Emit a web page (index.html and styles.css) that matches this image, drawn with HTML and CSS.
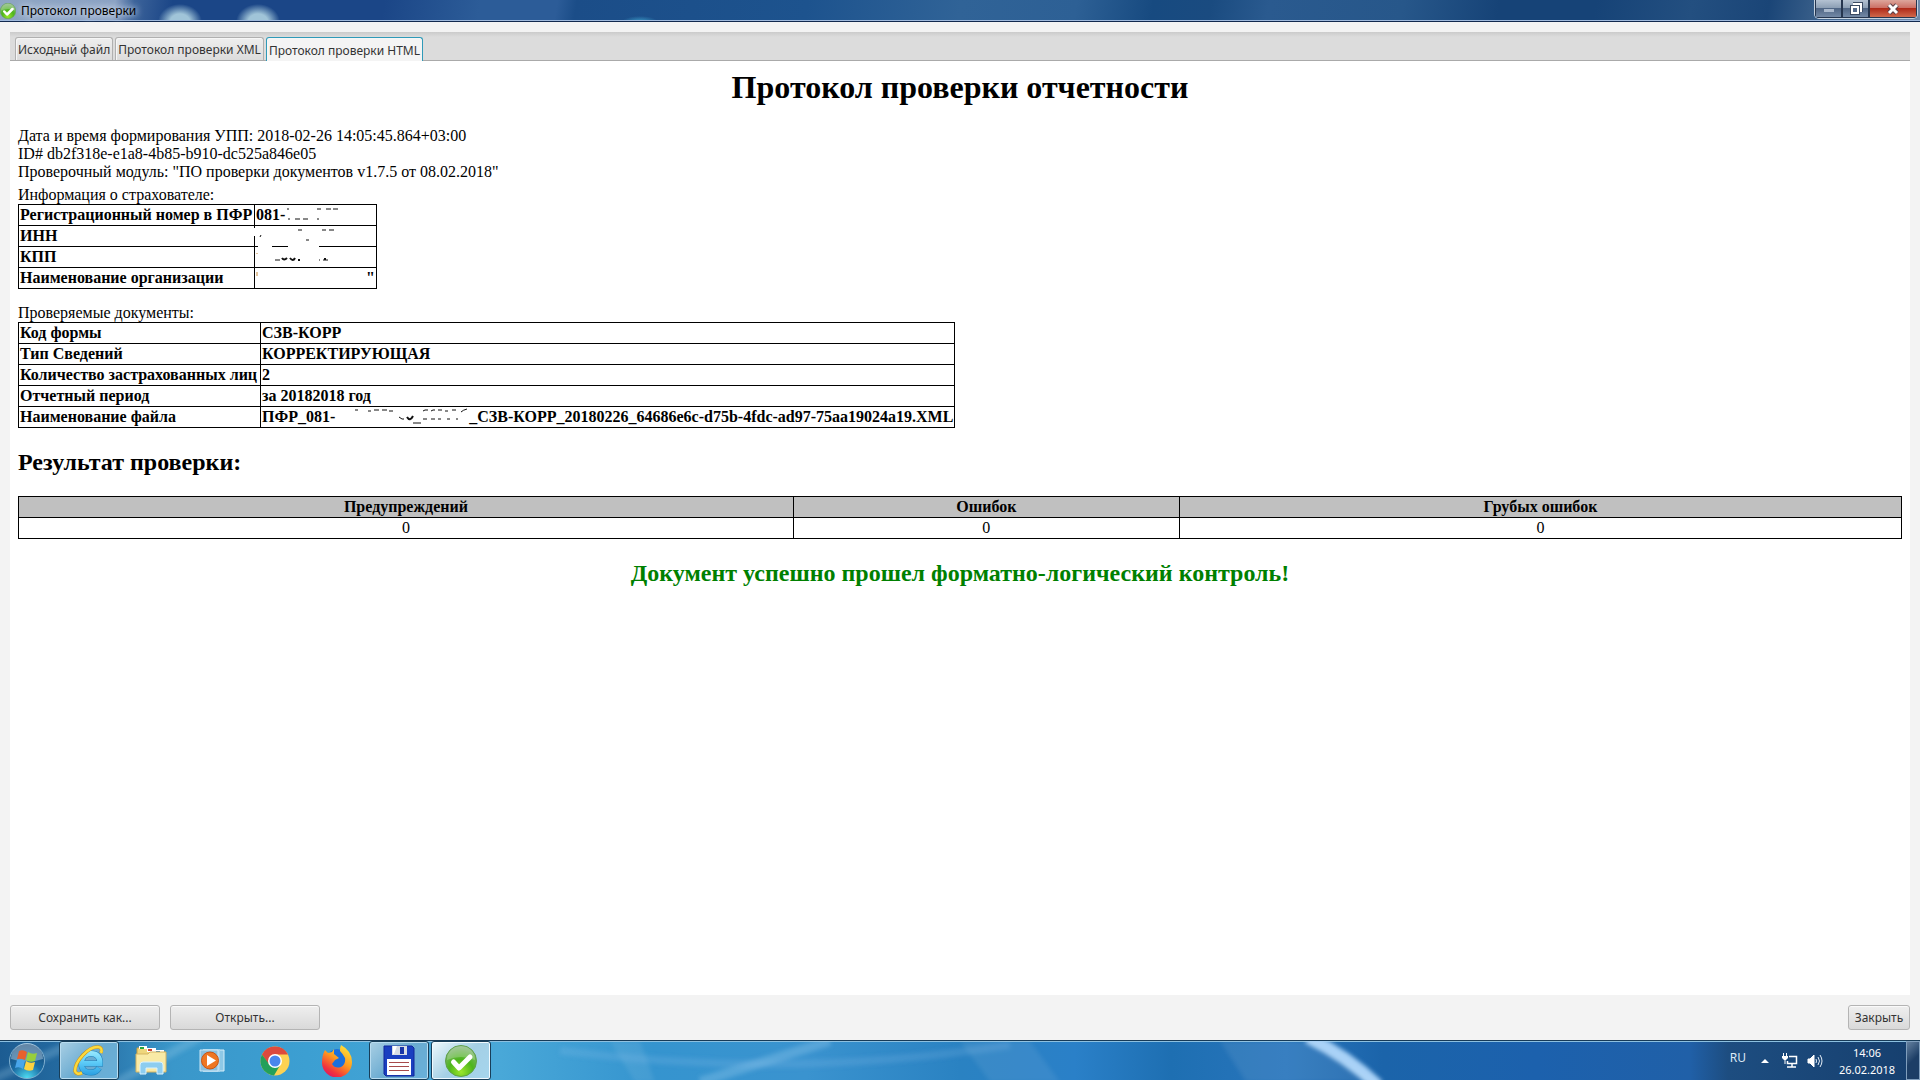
FILE: index.html
```html
<!DOCTYPE html>
<html lang="ru">
<head>
<meta charset="utf-8">
<title>Протокол проверки</title>
<link rel="stylesheet" href="styles.css">
</head>
<body>
<svg class="defs" width="0" height="0" aria-hidden="true">
  <defs>
    <radialGradient id="green" cx=".5" cy=".85" r=".8"><stop offset="0" stop-color="#9be62c"/><stop offset=".5" stop-color="#4db51c"/><stop offset="1" stop-color="#86b878"/></radialGradient>
    <symbol id="ok" viewBox="0 0 32 32"><circle cx="16" cy="16" r="15.500" fill="url(#green)" stroke="#5f9f4a"/><path d="M2 15a14 14 0 0 1 28 0q-14-6-28 0z" fill="#fff" opacity=".22"/><path d="M8.500 17l5.500 6 11-11" fill="none" stroke="#fff" stroke-width="5" stroke-linecap="round" stroke-linejoin="round"/></symbol>
  </defs>
</svg>
<header class="titlebar">
  <svg class="titlebar-icon" viewBox="0 0 32 32" aria-hidden="true"><use href="#ok"/></svg>
  <span class="titlebar-text">Протокол проверки</span>
  <div class="window-controls">
    <button class="wc" aria-label="Свернуть"><svg width="12" height="12"><rect x="1" y="6" width="10" height="3" fill="#a9b8cc"/></svg></button>
    <button class="wc" aria-label="Восстановить"><svg width="14" height="14"><path d="M4 2h8v8" fill="none" stroke="#3b4b63" stroke-width="4"/><path d="M4 2h8v8" fill="none" stroke="#fff" stroke-width="2"/><rect x="3" y="5" width="6" height="6" fill="#53698a" stroke="#3b4b63" stroke-width="4"/><rect x="3" y="5" width="6" height="6" fill="#53698a" stroke="#fff" stroke-width="2"/></svg></button>
    <button class="wc wc-close" aria-label="Закрыть окно"><svg width="14" height="12"><path d="M3 2l8 8M11 2l-8 8" stroke="#5a3f48" stroke-width="5"/><path d="M3 2l8 8M11 2l-8 8" stroke="#fff" stroke-width="3"/></svg></button>
  </div>
</header>
<main class="window">
  <div class="tabs" role="tablist">
    <button class="tab" role="tab">Исходный файл</button>
    <button class="tab" role="tab">Протокол проверки XML</button>
    <button class="tab tab-active" role="tab" aria-selected="true">Протокол проверки HTML</button>
  </div>
  <article class="report">
    <h1>Протокол проверки отчетности</h1>
    <p>Дата и время формирования УПП: 2018-02-26 14:05:45.864+03:00<br>ID# db2f318e-e1a8-4b85-b910-dc525a846e05<br>Проверочный модуль: "ПО проверки документов v1.7.5 от 08.02.2018"</p>
    <p class="caption-first">Информация о страхователе:</p>
    <div class="insurer">
      <table class="grid insurer-table">
        <tr><th>Регистрационный номер в ПФР</th><td>081-</td></tr>
        <tr><th>ИНН</th><td></td></tr>
        <tr><th>КПП</th><td></td></tr>
        <tr><th>Наименование организации</th><td class="quote">"</td></tr>
      </table>
      <svg class="erased" width="360" height="85" aria-hidden="true">
        <path d="M235 24h3v8h-3zM240 41h14v3h-14zM270 41h31v3h-31z" fill="#fff"/>
        <path d="M269 5h2M270 15h2M277 15h5M285 15h5M299 5h4M299 15h2M308 5h5M315 5h5M280 26h4M304 26h4M311 26h5M288 36h3M242 33l1-2M257 56h5M305 56h5M301 56h1" stroke="#111" fill="none"/>
        <path d="M264 54q2 3 5 0M272 54q3 4 5 0M280 56h2M307 54v2" stroke="#111" stroke-width="2" fill="none"/>
        <path d="M239 68v4M239 49v1" stroke="#c78b3c"/>
      </svg>
    </div>
    <p class="caption-docs">Проверяемые документы:</p>
    <table class="grid docs-table">
      <tr><th>Код формы</th><td>СЗВ-КОРР</td></tr>
      <tr><th>Тип Сведений</th><td>КОРРЕКТИРУЮЩАЯ</td></tr>
      <tr><th>Количество застрахованных лиц</th><td>2</td></tr>
      <tr><th>Отчетный период</th><td>за 20182018 год</td></tr>
      <tr><th>Наименование файла</th><td>ПФР_081-<svg class="erased-name" width="134" height="18" aria-hidden="true"><path d="M20 2h3M33 3h3M39 2h5M47 2h5M54 3h4M88 3l2-1h3M96 3l2-1h2M103 2h4M110 3h3M117 2h4M126 4q2-2 6-3M88 11h4M96 11h4M103 11h3M112 11h3M121 11h2M64 9l3 2h2M78 15h8" stroke="#111" fill="none"/><path d="M72 9q3 5 6-1" stroke="#111" stroke-width="2" fill="none"/></svg>_СЗВ-КОРР_20180226_64686e6c-d75b-4fdc-ad97-75aa19024a19.XML</td></tr>
    </table>
    <h2>Результат проверки:</h2>
    <table class="grid totals">
      <thead><tr><th class="c-warn">Предупреждений</th><th class="c-err">Ошибок</th><th>Грубых ошибок</th></tr></thead>
      <tbody><tr><td>0</td><td>0</td><td>0</td></tr></tbody>
    </table>
    <h2 class="success">Документ успешно прошел форматно-логический контроль!</h2>
  </article>
  <footer class="actions">
    <button class="btn btn-wide">Сохранить как...</button>
    <button class="btn btn-wide">Открыть...</button>
    <button class="btn btn-close">Закрыть</button>
  </footer>
</main>
<nav class="taskbar">
  <svg class="wallpaper" viewBox="0 0 1920 40" preserveAspectRatio="none" aria-hidden="true">
    <defs>
      <filter id="soft" x="-20%" y="-20%" width="140%" height="140%"><feGaussianBlur stdDeviation="2"/></filter>
    </defs>
    <g filter="url(#soft)" fill="none">
      <path d="M1308-4q40 20 70 50" stroke="#a9d2f7" stroke-width="13"/>
      <path d="M610 0h30l15 42h-20z" fill="#fff" opacity=".08"/>
      <path d="M830 0L700 42" stroke="#9fd0f2" stroke-width="10" opacity=".3"/>
      <path d="M560 10q230 30 450-6" stroke="#9fd0f2" stroke-width="8" opacity=".16"/>
      <path d="M960 0h70l30 42h-70z" fill="#fff" opacity=".07"/>
      <path d="M1220 0h90l66 42h-130z" fill="#fff" opacity=".08"/>
      <path d="M-10 40L70 4M110 46L200-4" stroke="#a4d5f0" stroke-width="9" opacity=".25"/>
    </g>
  </svg>
  <div class="apps">
    <button class="start" aria-label="Пуск">
      <svg width="38" height="38" viewBox="0 0 38 38">
        <defs><radialGradient id="orb" cx=".5" cy="1" r="1"><stop offset="0" stop-color="#4fe0f4"/><stop offset=".45" stop-color="#1b6da5"/><stop offset="1" stop-color="#16436f"/></radialGradient></defs>
        <circle cx="19" cy="19" r="17.500" fill="url(#orb)" stroke="#7fb0d0"/>
        <path d="M3 17a16 16 0 0 1 32 0q-16 5-32 0z" fill="#d8e9f5" opacity=".4"/>
        <path d="M11 9q4-2 8 1l-2 8q-4-2-8-1z" fill="#e8602c"/><path d="M20 10q4 3 9 1l-2 8q-5 2-9-1z" fill="#98cf3c"/>
        <path d="M9 18q4-2 8 1l-2 8q-4-3-8-1z" fill="#49a6ea"/><path d="M18 19q4 3 9 1l-2 8q-5 2-9-1z" fill="#fdd23f"/>
      </svg>
    </button>
    <button class="app app-open" aria-label="Internet Explorer">
      <svg width="34" height="34" viewBox="0 0 34 34"><defs><linearGradient id="ie" gradientUnits="userSpaceOnUse" x1="0" y1="5" x2="0" y2="31"><stop stop-color="#a5eeff"/><stop offset=".5" stop-color="#5fcdf8"/><stop offset="1" stop-color="#2b9fe2"/></linearGradient></defs><path d="M9 19.500H28Q28 9.500 19 9.500T9.500 19t9.500 9.500q5.500 0 8-4.500" fill="none" stroke="#1d7fb8" stroke-width="6"/><path d="M9 19.500H28Q28 9.500 19 9.500T9.500 19t9.500 9.500q5.500 0 8-4.500" fill="none" stroke="url(#ie)" stroke-width="5"/><path d="M29 9q2-5.500-3-6-7-.5-15 8T3 27q1 4 7 2" fill="none" stroke="#c9941a" stroke-width="3.500"/><path d="M29 9q2-5.500-3-6-7-.5-15 8T3 27q1 4 7 2" fill="none" stroke="#fcd93c" stroke-width="2.500"/></svg>
    </button>
    <button class="app" aria-label="Проводник">
      <svg width="34" height="32" viewBox="0 0 34 32"><path d="M3 3h10l2 3h15v20H3z" fill="#efd67c" stroke="#c59d3f"/><path d="M5 1h8v3H5z" fill="#fff"/><path d="M6 2h4v2H6z" fill="#25a63c"/><path d="M13 3h9v4h-9z" fill="#fff"/><path d="M14 4h4v2h-4z" fill="#cf4330"/><path d="M21 5h9v4h-9z" fill="#fff"/><path d="M22 6h4v2h-4z" fill="#3386cd"/><path d="M2 9h12l2-2h16v20H2z" fill="#f9eaa6" stroke="#d5b562"/><path d="M6 29V20q0-3 3-3h17q3 0 3 3v9h-6v-6H12v6z" fill="#8dcdf0" stroke="#d9f2ff"/></svg>
    </button>
    <button class="app" aria-label="Проигрыватель">
      <svg width="28" height="26" viewBox="0 0 28 26"><path d="M8 2h17v21H8z" fill="#8ec8e6" stroke="#d5eefa"/><path d="M4 1h17v23H4z" fill="#a4d3ec"/><path d="M1 2h18v21H1z" fill="#89c0df" stroke="#cbe7f6"/><circle cx="11" cy="12.500" r="8.500" fill="#ee7622" stroke="#c95513"/><path d="M8 7l9 5.500L8 18z" fill="#fff"/></svg>
    </button>
    <button class="app" aria-label="Google Chrome">
      <svg width="30" height="30" viewBox="0 0 30 30"><circle cx="15" cy="15" r="14.500" fill="#fcd253"/><path d="M2 8.500A14.500 14.500 0 0 1 28 8.500H15L8.500 18z" fill="#dc4a3d"/><path d="M2 8.500A14.500 14.500 0 0 0 14 29.500L20.500 18.500 9 18z" fill="#23a05a"/><circle cx="15" cy="15" r="7" fill="#fff"/><circle cx="15" cy="15" r="5.500" fill="#4a86ed"/></svg>
    </button>
    <button class="app" aria-label="Firefox">
      <svg width="32" height="32" viewBox="0 0 32 32"><defs><linearGradient id="fx" x1=".8" y1="0" x2=".2" y2="1"><stop stop-color="#ffe53b"/><stop offset=".45" stop-color="#ff9a1f"/><stop offset=".8" stop-color="#f1333d"/><stop offset="1" stop-color="#d7146b"/></linearGradient></defs><circle cx="16" cy="14" r="10" fill="#1c6fdc"/><path d="M4 5l3 3 4-1 2-3v5l5 4-4 2-3 4q3 5 9 3 5-3 4-9-2-4-5-7 0-4 1-6 11 6 11 17a15 15 0 0 1-30 1Q1 10 4 5z" fill="url(#fx)"/></svg>
    </button>
    <button class="app app-open" aria-label="Сохранение">
      <svg width="32" height="32" viewBox="0 0 32 32"><path d="M1 1h28l2 2v28H3l-2-2z" fill="#1a3fc0" stroke="#10279a"/><path d="M9 1h15v9H9z" fill="#d8dce4"/><path d="M10 1h4l-3 8h-1z" fill="#fff"/><path d="M17 2h4v7h-4z" fill="#1a36a8"/><path d="M4 14h24v16H4z" fill="#fff"/><path d="M6 17.500h20M6 21.500h20M6 25.500h20" stroke="#a74a4a"/></svg>
    </button>
    <button class="app app-current" aria-label="Протокол проверки">
      <svg width="32" height="32" viewBox="0 0 32 32"><use href="#ok"/></svg>
    </button>
  </div>
  <div class="tray">
    <span class="lang">RU</span>
    <svg width="8" height="6" aria-hidden="true"><path d="M0 5l4-4 4 4z" fill="#fff"/></svg>
    <svg class="net" width="16" height="16" aria-hidden="true"><path d="M7 3.500h7.500v7H5.500V8M10 11v3M5 14h9" fill="none" stroke="#fff" stroke-width="1.500"/><path d="M1.500 0v3M4.500 0v3M3 6v5" stroke="#fff"/><path d="M0 3h6v2L4 7H2L0 5z" fill="#fff"/></svg>
    <svg class="vol" width="16" height="14" aria-hidden="true"><path d="M1 5h2l4-4v12L3 9H1z" fill="#fff" stroke="#fff"/><path d="M9 5q1 2 0 4M11 3q3 4 0 8M13 1q4 6 0 12" fill="none" stroke="#e4edf6"/></svg>
    <time class="clock" datetime="2018-02-26T14:06">14:06<br>26.02.2018</time>
    <button class="show-desktop" aria-label="Показать рабочий стол"></button>
  </div>
</nav>
</body>
</html>
```
FILE: styles.css
```css
* { box-sizing: border-box; }
body {
  margin: 0;
  min-height: 100vh;
  display: flex;
  flex-direction: column;
  background: #f3f3f3;
  font: 12px/16px "Noto Sans", "Open Sans", sans-serif;
  color: #333;
}
button { font: inherit; color: inherit; padding: 0; margin: 0; }
svg { display: block; }
.defs { position: absolute; }

.titlebar {
  flex: none;
  height: 22px;
  display: flex;
  align-items: center;
  padding-right: 2px;
  border-bottom: 1px solid #12294f;
  box-shadow: inset 0 -1px #9fb9dc;
  background:
    radial-gradient(ellipse 22px 18px at 180px 22px, #a0c4d8 45%, transparent),
    radial-gradient(ellipse 22px 18px at 258px 22px, #a0c4d8 45%, transparent),
    radial-gradient(ellipse 18px 6px at 640px 22px, #3c9cc8, transparent),
    linear-gradient(100deg, #8ea5c3 0, #8ba2c4 6%, #3c639a 7%, #1b4687 9%, #1b4687 20%, #2c5c98 25%, #2c5c98 29%, #1b4d88 30%, #1d538e 42%, #306397 50%, #2d6095 56%, #174a80 60%, #1a4b80 63%, #2a5a8f 66%, #27578a 73%, #164377 78%, #164377 83%, #234f80 88%, #1a4577 92%, #56779b 97%, #6f8cac 100%);
}
.titlebar-icon { width: 16px; height: 16px; }
.titlebar-text {
  margin-left: 5px;
  color: #000;
  text-shadow: 0 0 6px #dce6f2, 0 0 8px #dce6f2;
}
.window-controls {
  margin-left: auto;
  align-self: flex-start;
  display: flex;
  height: 19px;
  border: 1px solid #c5d2e0;
  border-top: 0;
  border-radius: 0 0 5px 5px;
  overflow: hidden;
}
.wc {
  width: 27px;
  display: grid;
  place-items: center;
  border: 1px solid #26364f;
  border-top: 0;
  background: linear-gradient(#b4c2d2 0, #8d9fb5 45%, #506685 50%, #7389a6);
}
.wc-close { width: 48px; background: linear-gradient(#dda69c 0, #cc7166 45%, #b02b19 50%, #d0694c); }

.window {
  flex: 1;
  display: flex;
  flex-direction: column;
  padding: 10px;
}
.tabs {
  display: flex;
  gap: 2px;
  height: 29px;
  padding: 5px 5px 0;
  background: linear-gradient(#cbcbcb, #dcdcdc 5px);
  border-bottom: 1px solid #aaa;
}
.tab {
  padding: 2px 2px 0;
  border: 1px solid #b0b0b0;
  border-bottom: 0;
  border-radius: 3px 3px 0 0;
  background: linear-gradient(#eee, #dcdcdc);
  box-shadow: inset 1px 1px #f6f6f6;
}
.tab-active {
  margin-bottom: -1px;
  border: 1px solid #2f9ab8;
  border-bottom: 0;
  background: #f4f4f4;
}
.report {
  flex: 1;
  padding: 8px;
  background: #fff;
  color: #000;
  font: 16px/18px "Liberation Serif", "Times New Roman", serif;
}
.report p { margin: 0; }
.report h1 { margin: 0 0 21px; font-size: 32px; line-height: 37px; text-align: center; }
.report h2 { margin: 20px 0; font-size: 24px; line-height: 28px; }
.report .caption-first { margin-top: 5px; }
.report .caption-docs { margin-top: 15px; }
.report .success { text-align: center; color: #008000; }

.grid { border-collapse: collapse; }
.grid th, .grid td {
  height: 21px;
  padding: 1px;
  border: 1px solid #000;
  font-weight: bold;
  text-align: left;
  white-space: nowrap;
}
.insurer { position: relative; width: max-content; }
.insurer-table th { width: 236px; }
.insurer-table td { width: 122px; }
.docs-table th { width: 242px; }
.insurer-table .quote { text-align: right; }
.erased { position: absolute; left: 0; top: 0; }
.erased-name { display: inline-block; vertical-align: top; }
.totals { width: 100%; }
.totals th { background: #c0c0c0; text-align: center; }
.totals td { font-weight: normal; text-align: center; }
.c-warn { width: 41.15%; }
.c-err { width: 20.5%; }

.actions { display: flex; gap: 10px; padding-top: 10px; }
.btn {
  height: 25px;
  border: 1px solid #b4b4b4;
  border-radius: 3px;
  background: linear-gradient(#efefef, #d9d9d9);
  box-shadow: inset 0 1px #fafafa;
}
.btn-wide { width: 150px; }
.btn-close { width: 62px; margin-left: auto; }

.taskbar {
  position: relative;
  flex: none;
  height: 40px;
  display: flex;
  justify-content: space-between;
  border-top: 1px solid #173b58;
  box-shadow: inset 0 1px #8cc0e0;
  background: linear-gradient(90deg, #1c5c92 0, #2872a8 5%, #3a97ca 9%, #3c9fd2 16%, #49a8d8 26%, #3594cf 34%, #3a93cf 42%, #2a82c2 50%, #2a80c8 56%, #1e6fb2 61%, #2875bc 67%, #1b64aa 72%, #1c61ad 80%, #2060a8 88%, #1d4d80 90%, #163f6e 100%);
}
.wallpaper { position: absolute; inset: 0; width: 100%; height: 100%; }
.apps, .tray { position: relative; display: flex; }
.apps { gap: 2px; }
.start, .app {
  display: grid;
  place-items: center;
  border: 1px solid transparent;
  background: none;
}
.start { width: 54px; margin-right: 3px; }
.app { width: 60px; }
.app-open, .app-current {
  border-color: #183e59;
  border-radius: 3px;
  box-shadow: inset 0 0 0 1px #b8dcf0;
  background: linear-gradient(135deg, #a9cfe4 0, #6aabd1 50%, #68b0da);
}
.app-current { background: linear-gradient(135deg, #eef8fc, #a4cfe5 50%, #a5d6ee); box-shadow: inset 0 0 0 1px #f1faff; }
.tray { align-items: center; color: #fff; }
.lang { margin: 0 15px 6px 0; color: #dce9f5; }
.net { margin-left: 13px; }
.vol { margin-left: 9px; }
.clock { width: 78px; margin-left: 5px; text-align: center; font-size: 11px; line-height: 17px; }
.show-desktop {
  width: 14px;
  height: 100%;
  border: 1px solid #7f9ebd;
  background: linear-gradient(135deg, #64809f, #1c3e66 50%);
}
```
